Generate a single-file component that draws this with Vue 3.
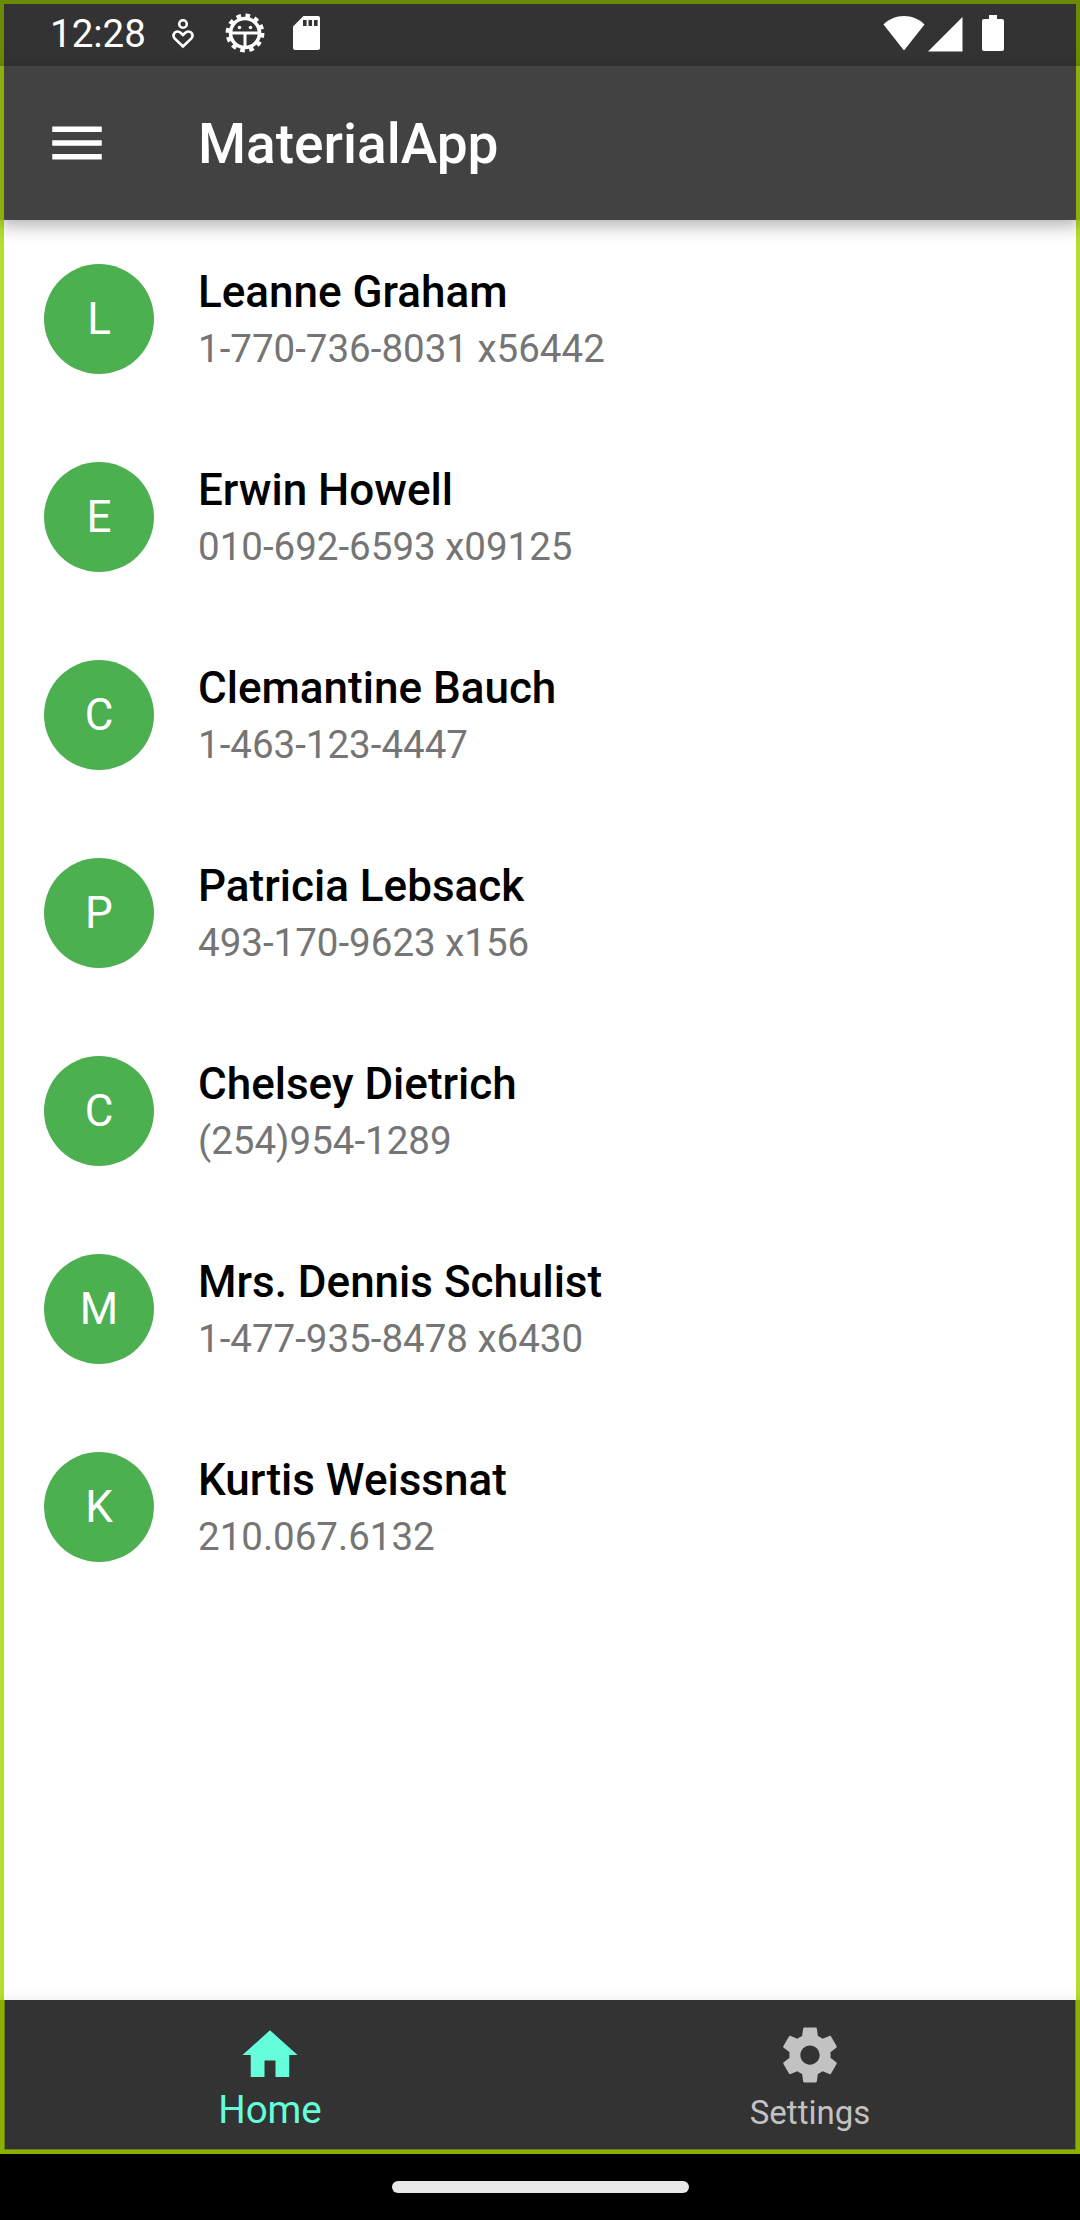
<script setup>
const people = [
  { name: 'Leanne Graham', phone: '1-770-736-8031 x56442' },
  { name: 'Erwin Howell', phone: '010-692-6593 x09125' },
  { name: 'Clemantine Bauch', phone: '1-463-123-4447' },
  { name: 'Patricia Lebsack', phone: '493-170-9623 x156' },
  { name: 'Chelsey Dietrich', phone: '(254)954-1289' },
  { name: 'Mrs. Dennis Schulist', phone: '1-477-935-8478 x6430' },
  { name: 'Kurtis Weissnat', phone: '210.067.6132' },
]
</script>

<template>
  <div class="device">
    <header class="status">
      <span class="time">12:28</span>
      <svg class="ic-heart" width="22" height="30" viewBox="0 0 22 30" fill="none" stroke="#fff" stroke-width="2.6">
        <circle cx="11" cy="5" r="3.8" />
        <path d="M11 27.5 2.6 19.4a4.4 4.4 0 0 1 0-5.6 4.4 4.4 0 0 1 6 0L11 16l2.4-2.2a4.4 4.4 0 0 1 6 0 4.4 4.4 0 0 1 0 5.6z" />
      </svg>
      <svg class="ic-gear" width="40" height="40" viewBox="0 0 40 40" fill="none" stroke="#fff">
        <circle cx="20" cy="20" r="14.5" stroke-width="3.6" />
        <circle cx="20" cy="20" r="17.4" stroke-width="4" stroke-dasharray="4.6 4.51" />
        <path d="M6 20h28M20 20v14" stroke-width="3" />
        <circle cx="14.5" cy="14.5" r="1.8" fill="#fff" stroke="none" />
        <circle cx="25.5" cy="14.5" r="1.8" fill="#fff" stroke="none" />
      </svg>
      <svg class="ic-sd" width="27" height="34" viewBox="0 0 27 34">
        <path fill="#fff" d="M10.5 0H25a2 2 0 0 1 2 2v30a2 2 0 0 1-2 2H2a2 2 0 0 1-2-2V10.500z" />
        <path fill="#333" d="M10 4h3.600v6H10zM15.500 4h3.600v6h-3.600zM21 4h3.600v6H21z" />
      </svg>
      <svg class="ic-wifi" width="42" height="36" viewBox="0 0 42 36">
        <path fill="#fff" d="M21 35.500.5 9.500C6 4 13 1 21 1s15 3 20.500 8.500z" />
      </svg>
      <svg class="ic-signal" width="35" height="35" viewBox="0 0 35 35">
        <path fill="#fff" d="M0 34.500 34.500 0v34.500z" />
      </svg>
      <svg class="ic-battery" width="22" height="36" viewBox="0 0 22 36">
        <path fill="#fff" d="M7 0h8v4h5a2 2 0 0 1 2 2v28a2 2 0 0 1-2 2H2a2 2 0 0 1-2-2V6a2 2 0 0 1 2-2h5z" />
      </svg>
    </header>

    <div class="appbar">
      <svg class="menu" width="66" height="66" viewBox="0 0 24 24">
        <path fill="#fff" d="M3 18h18v-2H3v2zm0-5h18v-2H3v2zm0-7v2h18V6H3z" />
      </svg>
      <span class="title">MaterialApp</span>
    </div>

    <main class="list">
      <div v-for="p in people" :key="p.name" class="row">
        <div class="avatar">{{ p.name.startsWith('Mrs') ? 'M' : p.name[0] }}</div>
        <div class="texts">
          <div class="name">{{ p.name }}</div>
          <div class="phone">{{ p.phone }}</div>
        </div>
      </div>
    </main>

    <nav class="bottom">
      <div class="tab active">
        <svg width="66" height="66" viewBox="0 0 24 24">
          <path fill="#64ffda" d="M10 20v-6h4v6h5v-8h3L12 3 2 12h3v8z" />
        </svg>
        <span class="label">Home</span>
      </div>
      <div class="tab">
        <svg width="66" height="66" viewBox="0 0 24 24">
          <path fill="#c2c2c2" d="M19.430 12.980c.04-.32.07-.64.07-.98s-.03-.66-.07-.98l2.110-1.650c.19-.15.24-.42.12-.64l-2-3.460c-.12-.22-.39-.3-.61-.22l-2.490 1c-.52-.4-1.080-.73-1.690-.98l-.38-2.650C14.460 2.180 14.250 2 14 2h-4c-.25 0-.46.18-.49.42l-.38 2.650c-.61.25-1.170.59-1.690.98l-2.490-1c-.23-.09-.49 0-.61.22l-2 3.460c-.13.22-.07.49.12.64l2.110 1.650c-.04.32-.07.65-.07.98s.03.66.07.98l-2.110 1.650c-.19.15-.24.42-.12.64l2 3.460c.12.22.39.3.61.22l2.490-1c.52.4 1.080.73 1.690.98l.38 2.650c.03.24.24.42.49.42h4c.25 0 .46-.18.49-.42l.38-2.650c.61-.25 1.170-.59 1.690-.98l2.490 1c.23.09.49 0 .61-.22l2-3.460c.12-.22.07-.49-.12-.64l-2.110-1.650zM12 15.500c-1.930 0-3.500-1.570-3.500-3.500s1.570-3.500 3.500-3.500 3.500 1.570 3.500 3.500-1.570 3.500-3.500 3.500z" />
        </svg>
        <span class="label">Settings</span>
      </div>
    </nav>

    <footer class="gesture">
      <div class="pill"></div>
    </footer>
  </div>
</template>

<style>
html, body { margin: 0; background: #000; }
</style>

<style scoped>
.device {
  width: 1080px;
  height: 2220px;
  display: flex;
  flex-direction: column;
  font-family: Roboto, "Liberation Sans", sans-serif;
  background: #fff;
  overflow: hidden;
}
.status {
  box-sizing: border-box;
  height: 66px;
  flex: none;
  display: flex;
  align-items: center;
  background: #333;
  border: 4px solid #6a8a05;
  border-bottom: 0;
  padding: 0 72px 0 46px;
  color: #fff;
}
.time {
  font-size: 38.5px;
  line-height: 1;
  color: #fff;
  margin-top: -2px;
}
.ic-heart { margin-left: 26px; margin-top: -2px; }
.ic-gear { margin-left: 31px; margin-top: -4px; }
.ic-sd { margin-left: 28px; margin-top: -4px; }
.ic-wifi { margin-left: auto; margin-top: -4px; }
.ic-signal { margin-left: 3px; margin-top: -2px; }
.ic-battery { margin-left: 19px; margin-top: -4px; }

.appbar {
  box-sizing: border-box;
  height: 154px;
  flex: none;
  display: flex;
  align-items: center;
  background: #424242;
  border-left: 4px solid #8aaf0c;
  border-right: 4px solid #8aaf0c;
  padding-left: 40px;
  position: relative;
  z-index: 2;
  box-shadow: 0 6px 16px rgba(0, 0, 0, 0.3);
}
.title {
  margin-left: 88px;
  margin-top: 2px;
  font-size: 55px;
  font-weight: 500;
  color: #fff;
  line-height: 1;
}
.list {
  flex: 1;
  min-height: 0;
  box-sizing: border-box;
  background: #fff;
  border-left: 4px solid #b2e02c;
  border-right: 4px solid #b2e02c;
}
.row {
  box-sizing: border-box;
  height: 198px;
  display: flex;
  align-items: flex-start;
  padding: 44px 0 0 40px;
}
.avatar {
  flex: none;
  width: 110px;
  height: 110px;
  border-radius: 50%;
  background: #4caf50;
  color: #fff;
  font-size: 44px;
  display: flex;
  align-items: center;
  justify-content: center;
}
.texts { margin-left: 44px; margin-top: -1px; }
.name {
  font-size: 44px;
  font-weight: 500;
  line-height: 58px;
  color: #000;
}
.phone {
  font-size: 38.5px;
  line-height: 55px;
  color: #757575;
}
.bottom {
  box-sizing: border-box;
  height: 154px;
  flex: none;
  display: flex;
  background: #333;
  border: 4px solid #8cb000;
  border-top: 0;
  box-shadow:
    0 -4px 10px rgba(0, 0, 0, 0.05),
    inset 1px 0 #66801a,
    inset -1px 0 #66801a,
    inset 0 -1px #66801a;
  position: relative;
  z-index: 1;
}
.tab {
  flex: 0 0 540px;
  display: flex;
  flex-direction: column;
  align-items: center;
  padding-top: 22px;
  box-sizing: border-box;
}
.tab:first-child { margin-left: -4px; }
.tab svg { display: block; flex: none; }
.label {
  font-size: 33px;
  line-height: 40px;
  color: #c2c2c2;
  margin-top: 5px;
}
.tab.active .label {
  font-size: 38.5px;
  line-height: 44px;
  color: #64ffda;
  margin-top: 0;
}
.gesture {
  height: 66px;
  flex: none;
  background: #000;
  display: flex;
  justify-content: center;
  padding-top: 27px;
  box-sizing: border-box;
}
.pill {
  width: 297px;
  height: 12px;
  border-radius: 6px;
  background: #e8e8e8;
}
</style>
